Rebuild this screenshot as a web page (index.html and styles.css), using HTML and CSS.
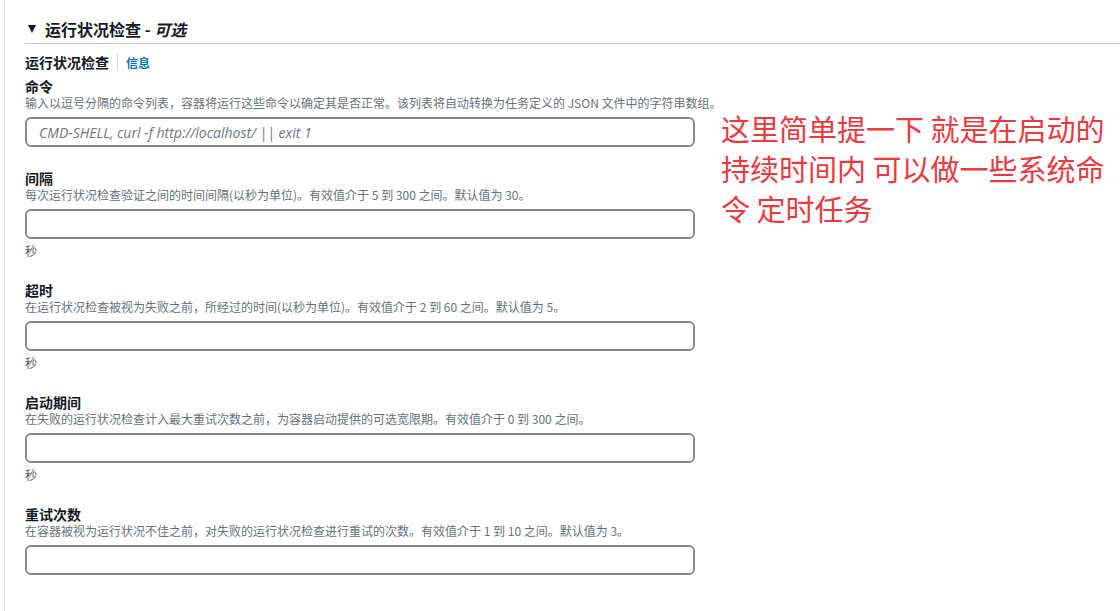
FILE: index.html
```html
<!DOCTYPE html>
<html lang="zh-CN">
<head>
    <meta charset="UTF-8">
    <meta name="viewport" content="width=device-width, initial-scale=1.0">
    <title>运行状况检查</title>
    <link rel="stylesheet" href="styles.css">
</head>
<body>
    <div class="panel">
        <h2 class="section-title">
            <svg class="caret" width="8" height="8" viewBox="0 0 8 8"><polygon points="0,0 8,0 4,8" fill="#16191f"/></svg>
            <span>运行状况检查 - <em>可选</em></span>
        </h2>

        <div class="section-body">
            <div class="subhead">
                <span class="subhead-title">运行状况检查</span>
                <span class="divider"></span>
                <a class="info-link" href="#">信息</a>
            </div>

            <div class="field">
                <label for="command">命令</label>
                <div class="hint">输入以逗号分隔的命令列表，容器将运行这些命令以确定其是否正常。该列表将自动转换为任务定义的 JSON 文件中的字符串数组。</div>
                <input type="text" id="command" placeholder="CMD-SHELL, curl -f http://localhost/ || exit 1">
            </div>

            <div class="field">
                <label for="interval">间隔</label>
                <div class="hint">每次运行状况检查验证之间的时间间隔(以秒为单位)。有效值介于 5 到 300 之间。默认值为 30。</div>
                <input type="text" id="interval">
                <div class="unit">秒</div>
            </div>

            <div class="field">
                <label for="timeout">超时</label>
                <div class="hint">在运行状况检查被视为失败之前，所经过的时间(以秒为单位)。有效值介于 2 到 60 之间。默认值为 5。</div>
                <input type="text" id="timeout">
                <div class="unit">秒</div>
            </div>

            <div class="field">
                <label for="startPeriod">启动期间</label>
                <div class="hint">在失败的运行状况检查计入最大重试次数之前，为容器启动提供的可选宽限期。有效值介于 0 到 300 之间。</div>
                <input type="text" id="startPeriod">
                <div class="unit">秒</div>
            </div>

            <div class="field">
                <label for="retries">重试次数</label>
                <div class="hint">在容器被视为运行状况不佳之前，对失败的运行状况检查进行重试的次数。有效值介于 1 到 10 之间。默认值为 3。</div>
                <input type="text" id="retries">
            </div>
        </div>

        <div class="note">这里简单提一下 就是在启动的<br>持续时间内 可以做一些系统命<br>令 定时任务</div>
    </div>
</body>
</html>
```

FILE: styles.css
```css
body {
    margin: 0;
    font-family: "Noto Sans CJK SC", "Noto Sans", sans-serif;
    color: #16191f;
    background-color: #fff;
}
.panel {
    position: relative;
    margin-left: 4px;
    border-left: 1px solid #d5d5d5;
    padding-left: 20px;
    min-height: 100vh;
}
.section-title {
    display: flex;
    align-items: center;
    gap: 9px;
    margin: 0;
    padding: 17px 0 2px 3px;
    height: 24px;
    border-bottom: 1px solid #c8c8c8;
    font-size: 16px;
    line-height: 24px;
    font-weight: bold;
}
.section-title em {
    font-style: italic;
}
.section-body {
    padding-top: 9px;
}
.subhead {
    display: flex;
    align-items: center;
    height: 18px;
    margin-bottom: 6px;
}
.subhead-title {
    font-size: 14px;
    font-weight: bold;
    line-height: 18px;
}
.divider {
    width: 1px;
    height: 16px;
    background-color: #d5d5d5;
    margin: 0 8px;
}
.info-link {
    color: #0073bb;
    font-size: 12px;
    font-weight: bold;
    text-decoration: none;
}
.field {
    margin-bottom: 22px;
}
.field label {
    display: block;
    font-size: 14px;
    font-weight: bold;
    line-height: 18px;
}
.hint {
    font-size: 12px;
    line-height: 16px;
    color: #687078;
}
.field input {
    display: block;
    box-sizing: border-box;
    width: 670px;
    height: 30px;
    margin-top: 6px;
    padding: 0 12px;
    border: 2px solid #8a8a92;
    border-radius: 6px;
    font-family: "Open Sans", sans-serif;
    font-size: 14px;
    color: #16191f;
    outline: none;
}
.field input::placeholder {
    color: #70757c;
    font-style: italic;
}
.unit {
    margin-top: 4px;
    font-size: 12px;
    line-height: 16px;
    color: #545b64;
}
.note {
    position: absolute;
    left: 716px;
    top: 108px;
    font-size: 29px;
    line-height: 40px;
    color: #e83a3f;
}
```
